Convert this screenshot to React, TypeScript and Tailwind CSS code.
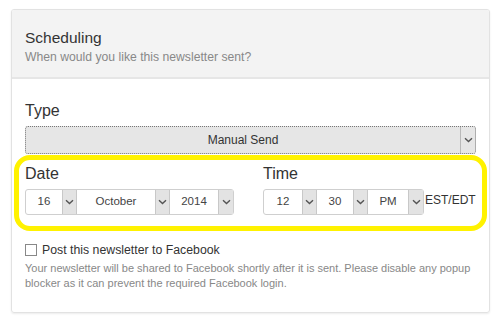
import { ReactNode } from 'react';

function Chevron() {
  return (
    <svg width="9" height="6" viewBox="0 0 9 6" className="block">
      <path d="M1 1.2 L4.5 4.6 L8 1.2" fill="none" stroke="#555" strokeWidth="1.4" />
    </svg>
  );
}

function FakeSelect({ value, width }: { value: string; width: string }) {
  return (
    <div className={`flex h-[24px] items-stretch ${width}`}>
      <div className="flex flex-1 items-center justify-center text-[11.5px] text-[#444]">{value}</div>
      <div className="flex w-[15px] items-center justify-center border-x border-[#c8c8c8] bg-[#e3e3e3]">
        <Chevron />
      </div>
    </div>
  );
}

function SelectGroup({ children }: { children: ReactNode }) {
  return (
    <div className="flex rounded-[3px] border border-[#cfcfcf] bg-white [&>div:last-child>div:last-child]:border-r-0">
      {children}
    </div>
  );
}

export default function App() {
  return (
    <div className="h-[327px] w-[500px] bg-white pl-[11px] pt-[9px] font-['Liberation_Sans',Arial,sans-serif]">
      <div className="h-[304px] w-[479px] overflow-hidden rounded-[3px] border border-[#e2e2e2] shadow-[0_1px_2px_rgba(0,0,0,0.08)]">
        {/* Header */}
        <div className="h-[69px] border-b-2 border-[#e6e6e6] bg-[#f3f3f3] px-[13px] pt-[18px]">
          <h2 className="text-[15.5px] leading-[20px] text-[#333]">Scheduling</h2>
          <p className="mt-[1px] text-[12.2px] leading-[16px] text-[#888]">When would you like this newsletter sent?</p>
        </div>

        {/* Body */}
        <div className="px-[13px] pt-[22px]">
          <div className="text-[16px] leading-[20px] text-[#333]">Type</div>
          <div className="mt-[5px] flex h-[28px] rounded-[3px] border border-dotted border-[#777] bg-[#e6e6e6]">
            <div className="flex flex-1 items-center justify-center text-[12px] text-[#333]">Manual Send</div>
            <div className="flex w-[15px] items-center justify-center border-l border-[#b9b9b9]">
              <Chevron />
            </div>
          </div>

          {/* Highlighted date/time */}
          <div className="-mx-[11px] mt-[1px] h-[76px] rounded-[16px] border-[5px] border-[#fff200] pl-[6px] pt-[4px]">
            <div className="flex">
              <div className="w-[238px]">
                <div className="text-[16px] leading-[20px] text-[#333]">Date</div>
                <div className="mt-[5px] flex">
                  <SelectGroup>
                    <FakeSelect value="16" width="w-[51px]" />
                    <FakeSelect value="October" width="w-[93px]" />
                    <FakeSelect value="2014" width="w-[63px]" />
                  </SelectGroup>
                </div>
              </div>
              <div>
                <div className="text-[16px] leading-[20px] text-[#333]">Time</div>
                <div className="mt-[5px] flex items-start">
                  <SelectGroup>
                    <FakeSelect value="12" width="w-[53px]" />
                    <FakeSelect value="30" width="w-[51px]" />
                    <FakeSelect value="PM" width="w-[55px]" />
                  </SelectGroup>
                  <span className="ml-[1px] mt-[2px] text-[12px] text-[#333]">EST/EDT</span>
                </div>
              </div>
            </div>
          </div>

          <label className="mt-[11px] flex items-center">
            <span className="h-[12px] w-[12px] border border-[#888] bg-white" />
            <span className="ml-[5px] text-[12.3px] leading-[16px] text-[#333]">Post this newsletter to Facebook</span>
          </label>
          <p className="mt-[3px] text-[11px] leading-[15px] text-[#888]">
            Your newsletter will be shared to Facebook shortly after it is sent. Please disable any popup blocker as it can prevent the required Facebook login.
          </p>
        </div>
      </div>
    </div>
  );
}
